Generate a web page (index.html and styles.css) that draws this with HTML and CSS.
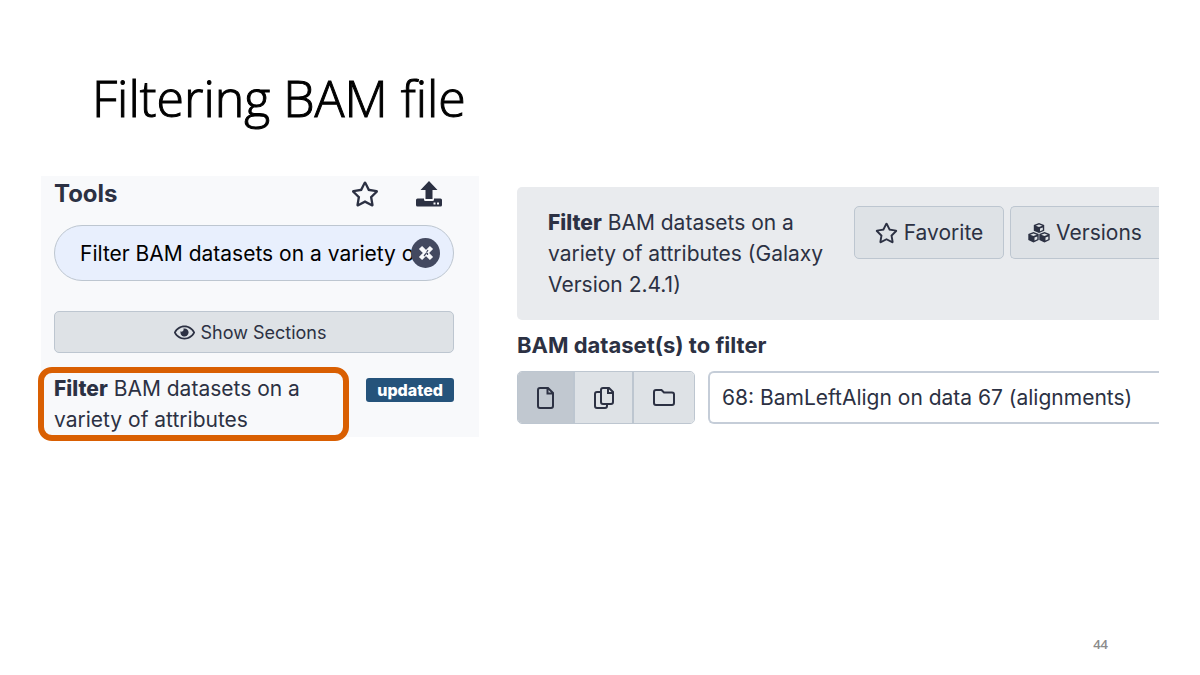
FILE: index.html
```html
<!DOCTYPE html>
<html lang="en">
<head>
<meta charset="utf-8">
<meta name="viewport" content="width=device-width, initial-scale=1">
<title>Filtering BAM file</title>
<link rel="stylesheet" href="styles.css">
</head>
<body>
<svg class="sprite" aria-hidden="true">
  <symbol id="star" viewBox="0 0 576 512"><path d="M528.1 171.5L382 150.2 316.7 17.8c-11.7-23.6-45.6-23.9-57.4 0L194 150.2 47.9 171.5c-26.2 3.8-36.7 36.1-17.7 54.6l105.7 103-25 145.5c-4.5 26.3 23.2 46 46.4 33.7L288 439.6l130.7 68.7c23.2 12.2 50.9-7.4 46.4-33.7l-25-145.5 105.7-103c19-18.5 8.5-50.8-17.7-54.6zM388.6 312.3l23.7 138.4L288 385.4l-124.3 65.3 23.7-138.4-100.6-98 139-20.2 62.2-126 62.2 126 139 20.2-100.6 98z"/></symbol>
</svg>
<main class="slide">
  <h1 class="title">Filtering BAM file</h1>
  <div class="columns">
    <section class="tools" aria-labelledby="tools-heading">
      <header class="tools-header">
        <h2 class="tools-heading" id="tools-heading">Tools</h2>
        <div class="tools-actions">
          <button class="icon-button" type="button" aria-label="Favorites"><svg class="icon-star-large"><use href="#star"/></svg></button>
          <button class="icon-button" type="button" aria-label="Upload">
            <svg class="icon-upload" viewBox="0 0 26 26"><path d="M13 0 L21.5 9 H16.5 V18 H9.500 V9 H4.500 Z"/><path fill-rule="evenodd" d="M1.500 17.500 H8 V18.500 Q8 20 9.500 20 H16.500 Q18 20 18 18.500 V17.500 H24.500 Q26 17.500 26 19 V24 Q26 25.500 24.500 25.500 H1.500 Q0 25.500 0 24 V19 Q0 17.500 1.500 17.500 Z M17.500 21.500 V23.500 H19.500 V21.500 Z M21 21.500 V23.500 H23 V21.500 Z"/></svg>
          </button>
        </div>
      </header>
      <div class="search">
        <input class="search-input" type="text" aria-label="Search tools" value="Filter BAM datasets on a variety o">
        <button class="search-clear" type="button" aria-label="Clear search">
          <svg class="icon-clear" viewBox="0 0 16 16"><path d="M2.500 2.500 L13.500 13.500 M13.500 2.500 L2.500 13.500" fill="none" stroke="#f8f9fc" stroke-width="4.500"/><path d="M8.500 7.500 L10 5 M6 11 L8.500 8 M9.500 8 V10" fill="none" stroke="#434960" stroke-width="1.200"/></svg>
        </button>
      </div>
      <button class="button sections-button" type="button"><svg class="icon-eye" viewBox="0 0 576 512"><path d="M288 144a110.94 110.94 0 0 0-31.24 5 55.4 55.4 0 0 1 7.24 27 56 56 0 0 1-56 56 55.4 55.4 0 0 1-27-7.24A111.71 111.71 0 1 0 288 144zm284.52 97.4C518.29 135.59 410.93 64 288 64S57.68 135.64 3.48 241.41a32.35 32.35 0 0 0 0 29.19C57.71 376.41 165.07 448 288 448s230.32-71.64 284.52-177.41a32.35 32.35 0 0 0 0-29.19zM288 400c-98.65 0-189.09-55-237.93-144C98.91 167 189.34 112 288 112s189.09 55 237.93 144C477.100 345 386.660 400 288 400z"/></svg>Show Sections</button>
      <div class="result">
        <a class="result-link" href="#tool"><b>Filter</b> BAM datasets on a variety of attributes</a>
        <span class="badge">updated</span>
      </div>
    </section>
    <section class="form" id="tool">
      <header class="form-header">
        <p class="form-title"><b>Filter</b> BAM datasets on a variety of attributes (Galaxy Version 2.4.1)</p>
        <div class="form-actions">
          <button class="button favorite" type="button"><svg class="icon-star"><use href="#star"/></svg>Favorite</button>
          <button class="button versions" type="button">
            <svg class="icon-cubes" viewBox="0 0 22 20"><g fill="#2c3143"><path d="M11 0 L16.200 2 V7.800 L11 10 L5.800 7.800 V2 Z"/><path d="M5.500 9 L10.700 11 V17 L5.500 19.500 L0.300 17 V11 Z"/><path d="M16.500 9 L21.700 11 V17 L16.500 19.500 L11.300 17 V11 Z"/></g><g fill="#dee2e6"><path d="M11 1.500 L14.300 2.800 L11 4.100 L7.700 2.800 Z"/><path d="M5.500 10.500 L8.800 11.800 L5.500 13.100 L2.200 11.800 Z"/><path d="M16.500 10.500 L19.800 11.800 L16.500 13.100 L13.200 11.800 Z"/><path d="M12 5.500 L14.800 4.400 V7 L12 8.200 Z"/><path d="M6.500 14.600 L9.300 13.500 V16.200 L6.500 17.600 Z"/><path d="M17.500 14.600 L20.300 13.500 V16.200 L17.500 17.600 Z"/></g></svg>Versions</button>
        </div>
      </header>
      <label class="field-label" for="dataset">BAM dataset(s) to filter</label>
      <div class="field">
        <div class="mode-group">
          <button class="mode mode-active" type="button" aria-label="Single dataset"><svg class="icon-file" viewBox="0 0 17 22"><path d="M3 1 H11 L16 6 V19 Q16 21 14 21 H3 Q1 21 1 19 V3 Q1 1 3 1 Z M10.500 1 V6.500 H16"/></svg></button>
          <button class="mode" type="button" aria-label="Multiple datasets"><svg class="icon-copy" viewBox="0 0 20 22"><path d="M9 1 H15 L19 5 V15 Q19 17 17 17 H9 Q7 17 7 15 V3 Q7 1 9 1 Z M14 1 V6 H19 M7 5 H3 Q1 5 1 7 V19 Q1 21 3 21 H11 Q13 21 13 19 V17"/></svg></button>
          <button class="mode" type="button" aria-label="Dataset collection"><svg class="icon-folder" viewBox="0 0 22 17"><path d="M3 1 H8.500 L11 3.500 H19 Q21 3.500 21 5.500 V14 Q21 16 19 16 H3 Q1 16 1 14 V3 Q1 1 3 1 Z"/></svg></button>
        </div>
        <select class="dataset" id="dataset"><option>68: BamLeftAlign on data 67 (alignments)</option></select>
      </div>
    </section>
  </div>
  <footer class="page-number">44</footer>
</main>
</body>
</html>
```
FILE: styles.css
```css
* { box-sizing: border-box; }
body {
  margin: 0;
  background: #fff;
  color: #2c3143;
  font: 21px/31px Inter, "Liberation Sans", sans-serif;
}
button, input, select { margin: 0; font: inherit; color: inherit; }
h1, h2, p { margin: 0; }
b { font-weight: 800; }
svg { display: block; flex: none; fill: currentColor; }
.sprite { position: absolute; width: 0; height: 0; }
.slide {
  min-height: 100vh;
  padding: 68px 41px 20px;
  display: flex;
  flex-direction: column;
}
.title {
  padding-left: 51px;
  color: #000;
  font: 300 50px/60px "Open Sans", Lato, sans-serif;
  -webkit-text-stroke: 1px #000;
}
.columns {
  display: grid;
  grid-template-columns: 438fr 642fr;
  gap: 38px;
  align-items: start;
  margin-top: 48px;
}
.tools { padding: 0 25px 0 13px; background: #f8f9fb; }
.tools-header {
  display: flex;
  justify-content: space-between;
  align-items: center;
  height: 36px;
  padding-right: 12px;
}
.tools-heading { font-size: 24px; line-height: 36px; font-weight: 700; }
.tools-actions { display: flex; gap: 37px; }
.icon-button { padding: 0; border: 0; background: none; }
.icon-star-large { width: 28px; height: 26px; }
.icon-upload { width: 26px; height: 26px; }
.search { position: relative; margin-top: 13px; }
.search-input {
  display: block;
  width: 100%;
  height: 56px;
  padding: 0 40px 0 25px;
  border: 1px solid #bdc6d0;
  border-radius: 28px;
  background: #e8effd;
  color: #000;
}
.search-clear {
  position: absolute;
  top: 13px;
  right: 14px;
  display: grid;
  place-items: center;
  width: 29px;
  height: 30px;
  padding: 0;
  border: 0;
  border-radius: 50%;
  background: #434960;
}
.icon-clear { width: 16px; height: 16px; }
.button {
  display: flex;
  align-items: center;
  justify-content: center;
  gap: 6px;
  border: 1px solid #bdc6d0;
  border-radius: 5px;
  background: #dee2e6;
}
.sections-button { width: 100%; height: 42px; margin-top: 30px; padding-right: 14px; font-size: 18px; }
.icon-eye { width: 21px; height: 19px; }
.result {
  display: flex;
  justify-content: space-between;
  align-items: flex-start;
  margin-top: 14px;
}
.result-link {
  width: 311px;
  margin: 0 0 -4px -16px;
  padding: 0 24px 0 10px;
  border: 6px solid #d95f02;
  border-radius: 14px;
  color: inherit;
  text-decoration: none;
}
.badge {
  margin-top: 11px;
  padding: 0 11px;
  border-radius: 3px;
  background: #25537b;
  color: #fff;
  font-size: 16px;
  line-height: 24px;
  font-weight: 800;
}
.form { margin-top: 11px; overflow: hidden; }
.form-header {
  display: flex;
  justify-content: space-between;
  align-items: flex-start;
  height: 133px;
  padding: 19px 0 0 31px;
  border-radius: 5px 0 0 5px;
  background: #e9ebee;
}
.form-title { width: 285px; padding-top: 1px; }
.form-actions { display: flex; gap: 6px; }
.favorite { width: 150px; height: 53px; }
.versions { width: 149px; height: 53px; border-right: 0; border-radius: 5px 0 0 5px; }
.icon-star { width: 23px; height: 22px; }
.icon-cubes { width: 22px; height: 20px; }
.field-label { display: block; margin: 10px 0; font-size: 22px; font-weight: 700; }
.field { display: flex; gap: 13px; }
.mode-group {
  display: grid;
  grid-template-columns: 55fr 59fr 62fr;
  width: 178px;
  height: 53px;
  overflow: hidden;
  border: 1px solid #bdc6d0;
  border-radius: 5px;
}
.mode {
  display: grid;
  place-items: center;
  padding: 0;
  border: 0;
  background: #dee2e6;
}
.mode + .mode { border-left: 2px solid #bdc6d0; }
.mode-active { background: #c1c8d0; }
.mode svg { fill: none; stroke: currentColor; stroke-width: 2; }
.icon-file { width: 17px; height: 22px; }
.icon-copy { width: 20px; height: 22px; }
.icon-folder { width: 22px; height: 17px; }
.dataset {
  flex: 1;
  min-width: 0;
  height: 53px;
  padding: 0 12px;
  appearance: none;
  border: 2px solid #c5cdd8;
  border-right: 0;
  border-radius: 6px 0 0 6px;
  background: #fff;
}
.page-number {
  margin-top: auto;
  padding-right: 51px;
  color: #8b8b8b;
  font: 600 13px/22px "Open Sans", Lato, sans-serif;
  text-align: right;
}
```
